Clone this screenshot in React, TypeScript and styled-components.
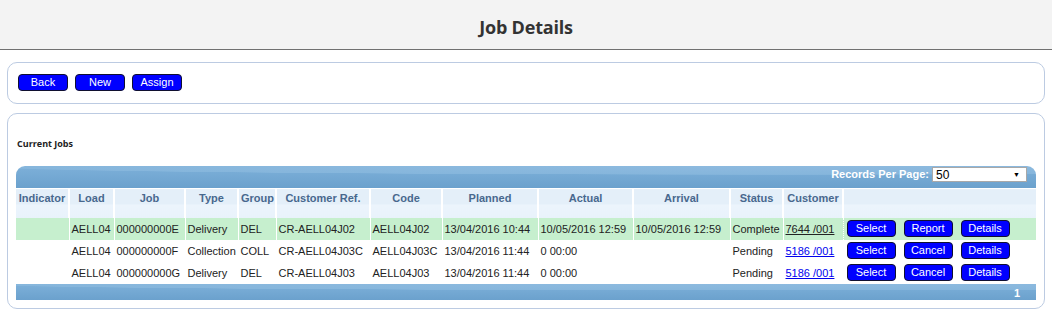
import React from 'react';
import styled, { createGlobalStyle } from 'styled-components';

const GlobalStyle = createGlobalStyle`
  body {
    margin: 0;
    background: #ffffff;
    font-family: "Liberation Sans", Arial, sans-serif;
    font-size: 11px;
    color: #222222;
  }
`;

const Header = styled.div`
  height: 49px;
  background: #f3f3f3;
  border-bottom: 1px solid #707070;
  display: flex;
  align-items: center;
  justify-content: center;

  h1 {
    margin: 4px 0 0 0;
    font-family: "Open Sans", "Liberation Sans", sans-serif;
    font-weight: 700;
    font-size: 18px;
    color: #333333;
    letter-spacing: -0.2px;
  }
`;

const Panel = styled.div<{ $top: number }>`
  margin: ${(p) => p.$top}px 7px 0 7px;
  border: 1px solid #bccbe2;
  border-radius: 10px;
  background: #ffffff;
`;

const Toolbar = styled.div`
  display: flex;
  gap: 7px;
  padding: 11px 10px 12px 10px;
`;

const Button = styled.button<{ $w?: number }>`
  width: ${(p) => p.$w || 49}px;
  height: 17px;
  padding: 0;
  background: #0000ff;
  color: #ffffff;
  border: 1px solid #101030;
  border-radius: 4px;
  font-family: "Liberation Sans", Arial, sans-serif;
  font-size: 11px;
  line-height: 15px;
  cursor: pointer;
`;

const PanelBody = styled.div`
  padding: 24px 8px 8px 8px;
`;

const SectionTitle = styled.div`
  font-family: "Open Sans", "Liberation Sans", sans-serif;
  font-weight: 700;
  font-size: 9px;
  line-height: 12px;
  color: #222222;
  margin: 0 0 16px 1px;
`;

const TopBar = styled.div`
  height: 22px;
  border-radius: 9px 9px 0 0;
  background:
    radial-gradient(ellipse 140% 70% at 75% 0%, #8dbadf 0%, #86b6dc 55%, rgba(134, 182, 220, 0) 57%),
    linear-gradient(#7db0d9, #6ba1cd);
  display: flex;
  justify-content: flex-end;
  align-items: flex-start;
  padding: 1px 9px 0 0;
  box-sizing: border-box;
  gap: 3px;

  label {
    color: #ffffff;
    font-weight: 700;
    font-size: 11px;
    line-height: 15px;
  }
`;

const FakeSelect = styled.div`
  width: 95px;
  height: 15px;
  box-sizing: border-box;
  background: #ffffff;
  border: 1px solid #a8a8a8;
  display: flex;
  align-items: center;
  justify-content: space-between;
  padding: 0 6px 0 3px;
  font-size: 12px;
  color: #000000;

  span.arrow {
    font-size: 7px;
  }
`;

const Table = styled.table`
  width: 1020px;
  border-collapse: collapse;
  table-layout: fixed;
`;

const Th = styled.th`
  height: 29px;
  box-sizing: border-box;
  padding: 3px 2px 12px 2px;
  vertical-align: top;
  text-align: center;
  font-size: 11px;
  font-weight: 700;
  color: #48688e;
  white-space: nowrap;
  overflow: hidden;
  background: linear-gradient(#e4eff9 0%, #e4eff9 52%, #ecf4fc 52%, #e8f2fb 100%);
  border-left: 2px solid #ffffff;
  border-top: 1px solid #ffffff;

  &:first-child {
    border-left: none;
  }
`;

const Row = styled.tr<{ $done?: boolean }>`
  height: 22px;
  background: ${(p) => (p.$done ? '#c6efce' : '#ffffff')};
`;

const Td = styled.td`
  padding: 0 2px;
  font-size: 11px;
  white-space: nowrap;
  overflow: hidden;
  color: #222222;
  border-left: 1px dotted #ffffff;

  &:first-child {
    border-left: none;
  }
`;

const Actions = styled.td`
  padding: 0 0 0 3px;
  border-left: 1px dotted #ffffff;

  button + button {
    margin-left: 8px;
  }
`;

const CustLink = styled.a<{ $visited?: boolean }>`
  color: ${(p) => (p.$visited ? '#222222' : '#0000ee')};
  text-decoration: underline;
`;

const Footer = styled.div`
  height: 16px;
  background:
    radial-gradient(ellipse 140% 70% at 75% 0%, #8dbadf 0%, #86b6dc 55%, rgba(134, 182, 220, 0) 57%),
    linear-gradient(#7db0d9, #6ba1cd);
  color: #ffffff;
  font-weight: 700;
  font-size: 11px;
  line-height: 19px;
  text-align: right;
  padding-right: 16px;
`;

const widths = [53, 45, 71, 53, 38, 94, 72, 96, 95, 97, 53, 60, 193];
const headers = [
  'Indicator',
  'Load',
  'Job',
  'Type',
  'Group',
  'Customer Ref.',
  'Code',
  'Planned',
  'Actual',
  'Arrival',
  'Status',
  'Customer',
  '',
];

type Job = {
  load: string;
  job: string;
  type: string;
  group: string;
  ref: string;
  code: string;
  planned: string;
  actual: string;
  arrival: string;
  status: string;
  customer: string;
  done: boolean;
  second: string;
};

const jobs: Job[] = [
  {
    load: 'AELL04',
    job: '000000000E',
    type: 'Delivery',
    group: 'DEL',
    ref: 'CR-AELL04J02',
    code: 'AELL04J02',
    planned: '13/04/2016 10:44',
    actual: '10/05/2016 12:59',
    arrival: '10/05/2016 12:59',
    status: 'Complete',
    customer: '7644 /001',
    done: true,
    second: 'Report',
  },
  {
    load: 'AELL04',
    job: '000000000F',
    type: 'Collection',
    group: 'COLL',
    ref: 'CR-AELL04J03C',
    code: 'AELL04J03C',
    planned: '13/04/2016 11:44',
    actual: '0 00:00',
    arrival: '',
    status: 'Pending',
    customer: '5186 /001',
    done: false,
    second: 'Cancel',
  },
  {
    load: 'AELL04',
    job: '000000000G',
    type: 'Delivery',
    group: 'DEL',
    ref: 'CR-AELL04J03',
    code: 'AELL04J03',
    planned: '13/04/2016 11:44',
    actual: '0 00:00',
    arrival: '',
    status: 'Pending',
    customer: '5186 /001',
    done: false,
    second: 'Cancel',
  },
];

const App = () => {
  return (
    <>
      <GlobalStyle />
      <Header>
        <h1>Job Details</h1>
      </Header>

      <Panel $top={12}>
        <Toolbar>
          <Button $w={50}>Back</Button>
          <Button $w={50}>New</Button>
          <Button $w={50}>Assign</Button>
        </Toolbar>
      </Panel>

      <Panel $top={9}>
        <PanelBody>
          <SectionTitle>Current Jobs</SectionTitle>
          <TopBar>
            <label>Records Per Page:</label>
            <FakeSelect>
              <span>50</span>
              <span className="arrow">▼</span>
            </FakeSelect>
          </TopBar>
          <Table>
            <colgroup>
              {widths.map((w, i) => (
                <col key={i} style={{ width: w }} />
              ))}
            </colgroup>
            <thead>
              <tr>
                {headers.map((h, i) => (
                  <Th key={i}>{h}</Th>
                ))}
              </tr>
            </thead>
            <tbody>
              {jobs.map((j, i) => (
                <Row key={i} $done={j.done}>
                  <Td></Td>
                  <Td>{j.load}</Td>
                  <Td>{j.job}</Td>
                  <Td>{j.type}</Td>
                  <Td>{j.group}</Td>
                  <Td>{j.ref}</Td>
                  <Td>{j.code}</Td>
                  <Td>{j.planned}</Td>
                  <Td>{j.actual}</Td>
                  <Td>{j.arrival}</Td>
                  <Td>{j.status}</Td>
                  <Td>
                    <CustLink href="#" $visited={j.done}>
                      {j.customer}
                    </CustLink>
                  </Td>
                  <Actions>
                    <Button>Select</Button>
                    <Button>{j.second}</Button>
                    <Button>Details</Button>
                  </Actions>
                </Row>
              ))}
            </tbody>
          </Table>
          <Footer>1</Footer>
        </PanelBody>
      </Panel>
    </>
  );
};

export default App;
